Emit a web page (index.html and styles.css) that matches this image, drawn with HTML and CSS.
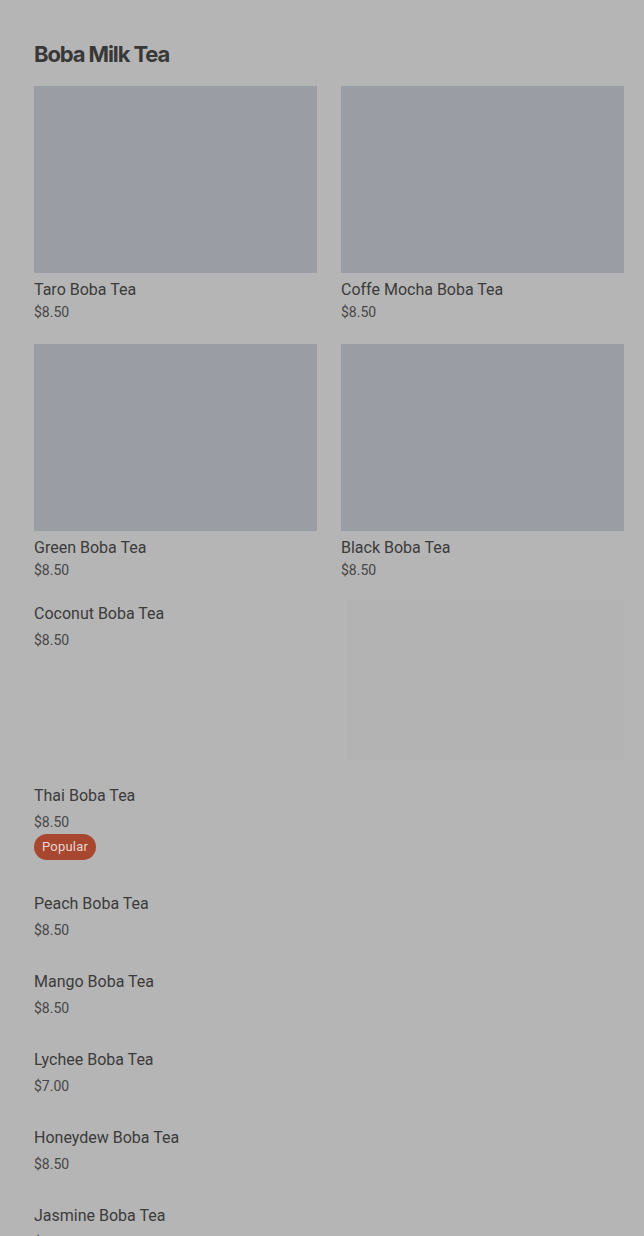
FILE: index.html
```html
<!DOCTYPE html>
<html>
<head>
<meta charset="utf-8">
<link rel="stylesheet" href="styles.css">
</head>
<body>
<main class="menu">
  <h1 class="section-title">Boba Milk Tea</h1>
  <div class="grid">
    <div class="card"><div class="thumb"></div><div class="name">Taro Boba Tea</div><div class="price">$8.50</div></div>
    <div class="card"><div class="thumb"></div><div class="name">Coffe Mocha Boba Tea</div><div class="price">$8.50</div></div>
    <div class="card"><div class="thumb"></div><div class="name">Green Boba Tea</div><div class="price">$8.50</div></div>
    <div class="card"><div class="thumb"></div><div class="name">Black Boba Tea</div><div class="price">$8.50</div></div>
  </div>
  <ul class="list">
    <li class="item item-with-img">
      <div class="info"><div class="name">Coconut Boba Tea</div><div class="price">$8.50</div></div>
      <div class="ghost"></div>
    </li>
    <li class="item">
      <div class="info"><div class="name">Thai Boba Tea</div><div class="price">$8.50</div><span class="badge">Popular</span></div>
    </li>
    <li class="item"><div class="info"><div class="name">Peach Boba Tea</div><div class="price">$8.50</div></div></li>
    <li class="item"><div class="info"><div class="name">Mango Boba Tea</div><div class="price">$8.50</div></div></li>
    <li class="item"><div class="info"><div class="name">Lychee Boba Tea</div><div class="price">$7.00</div></div></li>
    <li class="item"><div class="info"><div class="name">Honeydew Boba Tea</div><div class="price">$8.50</div></div></li>
    <li class="item"><div class="info"><div class="name">Jasmine Boba Tea</div><div class="price">$8.50</div></div></li>
  </ul>
</main>
</body>
</html>
```
FILE: styles.css
```css
html, body {
  margin: 0;
  padding: 0;
  background: #b5b5b5;
  overflow: hidden;
}
body {
  font-family: Roboto, "Liberation Sans", sans-serif;
  color: #3b3b3b;
}
.menu {
  padding: 38px 20px 0 34px;
}
.section-title {
  margin: 0 0 16px;
  font-family: Inter, "Liberation Sans", sans-serif;
  font-weight: 700;
  font-size: 22px;
  line-height: 32px;
  letter-spacing: -1.1px;
  color: #383838;
}
.grid {
  display: grid;
  grid-template-columns: 1fr 1fr;
  column-gap: 24px;
  row-gap: 22px;
}
.thumb {
  height: 187px;
  background: #9a9da3;
}
.card .name {
  margin-top: 7px;
}
.name {
  font-size: 16px;
  line-height: 20px;
  color: #3b3b3b;
}
.price {
  font-size: 14px;
  line-height: 20px;
  color: #474747;
}
.card .price {
  margin-top: 2px;
}
.list {
  list-style: none;
  margin: 7px 0 0;
  padding: 0;
}
.item {
  display: flex;
  padding: 17px 0 15px;
}
.item .price {
  margin-top: 6px;
}
.info {
  flex: 1;
  display: flex;
  flex-direction: column;
  align-items: flex-start;
}
.item-with-img {
  padding: 13px 0 9px;
}
.item-with-img .info {
  padding-top: 4px;
}
.ghost {
  width: 277px;
  height: 160px;
  background: #b3b3b3;
  border-left: 5px solid #b1b1b1;
  box-sizing: border-box;
}
.badge {
  display: inline-block;
  margin: 2px 0 2px;
  height: 26px;
  line-height: 26px;
  padding: 0 8px;
  border-radius: 13px;
  background: #a8472f;
  color: #ead6cf;
  font-size: 13px;
  letter-spacing: 0.2px;
}
```
